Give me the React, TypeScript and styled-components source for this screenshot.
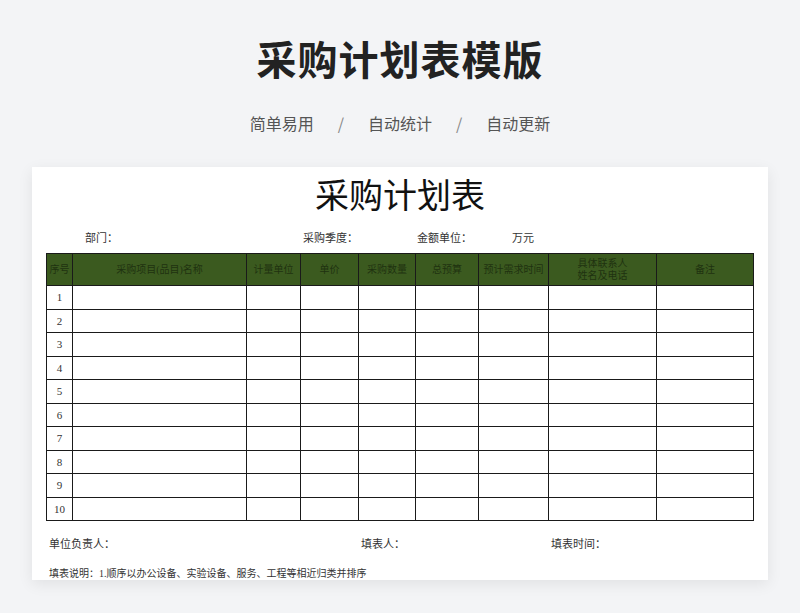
import * as React from "react";
import styled, { createGlobalStyle } from "styled-components";

const GlobalStyle = createGlobalStyle`
  html, body { margin: 0; padding: 0; background: #f3f4f6; }
  body { font-family: "Noto Sans CJK SC", "Noto Sans", sans-serif; }
`;

const Page = styled.div`
  width: 800px;
  height: 613px;
  overflow: hidden;
  background: #f3f4f6;
  display: flex;
  flex-direction: column;
  align-items: center;
`;

const Heading = styled.h1`
  margin: 34px 0 0;
  height: 48px;
  font-size: 40px;
  line-height: 48px;
  font-weight: 700;
  color: #222;
  letter-spacing: 1px;
`;

const Sub = styled.div`
  margin-top: 29px;
  display: flex;
  gap: 20px;
  font-size: 16px;
  line-height: 24px;
  color: #555;
`;

const Slash = styled.span`
  color: #888;
  padding: 0 4px;
`;

const Card = styled.div`
  margin-top: 32px;
  width: 736px;
  height: 413px;
  background: #fff;
  box-shadow: 0 4px 14px rgba(0, 0, 0, 0.08);
  overflow: hidden;
  padding: 0 14px;
  box-sizing: border-box;
  font-family: "Liberation Serif", "Noto Sans CJK SC", serif;
  color: #222;
`;

const SheetTitle = styled.div`
  text-align: center;
  font-size: 34px;
  line-height: 40px;
  margin-top: 10px;
  color: #111;
`;

const InfoRow = styled.div`
  display: grid;
  grid-template-columns: 218px 114px 95px 1fr;
  padding-left: 39px;
  margin-top: 14px;
  font-size: 11px;
  line-height: 14px;
  color: #333;
`;

const Table = styled.table`
  margin-top: 8px;
  border-collapse: collapse;
  table-layout: fixed;
  width: 707px;
  font-size: 10px;
`;

const Th = styled.th`
  background: #3b5a1f;
  color: #1f3210;
  font-weight: 400;
  border: 1px solid #1a1a1a;
  height: 31px;
  padding: 0;
  line-height: 12px;
  white-space: nowrap;
`;

const Td = styled.td`
  border: 1px solid #1a1a1a;
  height: 22.5px;
  padding: 0;
  text-align: center;
  font-size: 11px;
  color: #333;
`;

const FootRow = styled.div`
  display: grid;
  grid-template-columns: 312px 190px 1fr;
  padding-left: 3px;
  margin-top: 16px;
  font-size: 11px;
  line-height: 14px;
  color: #333;
`;

const Note = styled.div`
  margin-top: 16px;
  padding-left: 3px;
  font-size: 10px;
  line-height: 14px;
  color: #333;
  white-space: nowrap;
`;

const widths = [26, 174, 54, 58, 57, 63, 70, 108, 97];
const heads: React.ReactNode[] = [
  "序号",
  "采购项目(品目)名称",
  "计量单位",
  "单价",
  "采购数量",
  "总预算",
  "预计需求时间",
  <>具体联系人<br />姓名及电话</>,
  "备注",
];

export default function App() {
  return (
    <Page>
      <GlobalStyle />
      <Heading>采购计划表模版</Heading>
      <Sub>
        <span>简单易用</span>
        <Slash>/</Slash>
        <span>自动统计</span>
        <Slash>/</Slash>
        <span>自动更新</span>
      </Sub>
      <Card>
        <SheetTitle>采购计划表</SheetTitle>
        <InfoRow>
          <span>部门：</span>
          <span>采购季度：</span>
          <span>金额单位：</span>
          <span>万元</span>
        </InfoRow>
        <Table>
          <colgroup>
            {widths.map((w, i) => (
              <col key={i} style={{ width: w }} />
            ))}
          </colgroup>
          <thead>
            <tr>
              {heads.map((h, i) => (
                <Th key={i}>{h}</Th>
              ))}
            </tr>
          </thead>
          <tbody>
            {Array.from({ length: 10 }, (_, r) => (
              <tr key={r}>
                {widths.map((_, c) => (
                  <Td key={c}>{c === 0 ? r + 1 : ""}</Td>
                ))}
              </tr>
            ))}
          </tbody>
        </Table>
        <FootRow>
          <span>单位负责人：</span>
          <span>填表人：</span>
          <span>填表时间：</span>
        </FootRow>
        <Note>填表说明：1.顺序以办公设备、实验设备、服务、工程等相近归类并排序</Note>
      </Card>
    </Page>
  );
}
